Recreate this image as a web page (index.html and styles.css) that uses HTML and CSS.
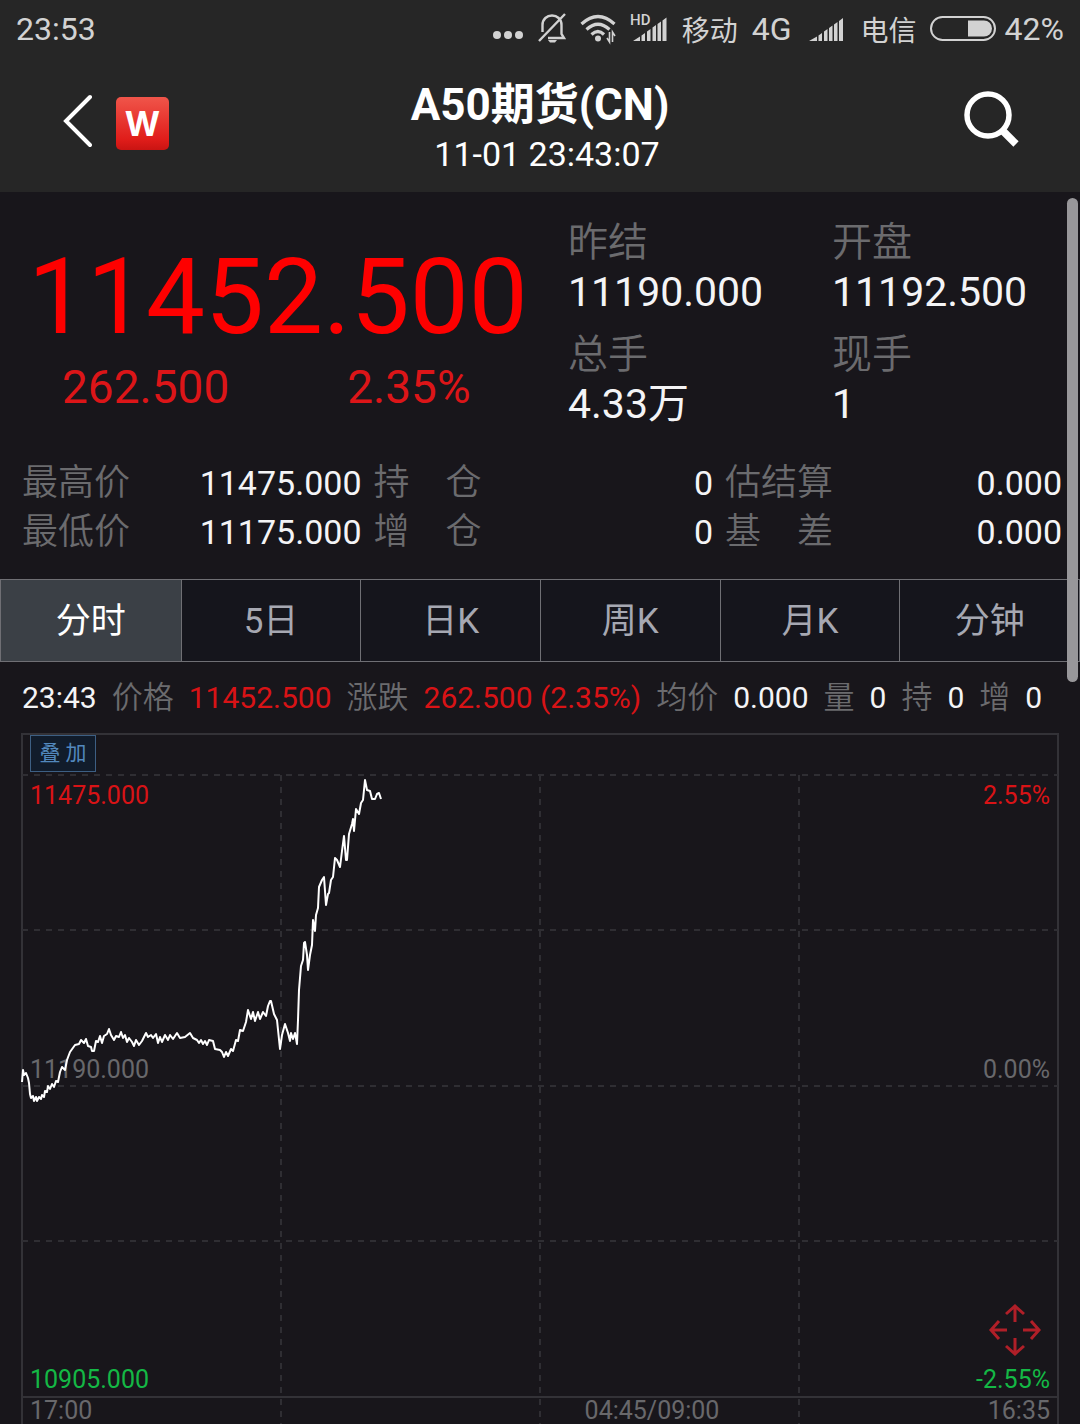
FILE: index.html
```html
<!DOCTYPE html>
<html lang="zh-CN">
<head>
    <meta charset="UTF-8">
    <meta name="viewport" content="width=device-width, initial-scale=1.0">
    <title>A50期货(CN)</title>
    <link rel="stylesheet" href="styles.css">
</head>
<body>
    <header class="top">
        <div class="status">
            <span class="clock">23:53</span>
            <svg class="dots" width="32" height="36" viewBox="0 0 32 36" fill="currentColor">
                <circle cx="5" cy="24" r="4"/><circle cx="16" cy="24" r="4"/><circle cx="27" cy="24" r="4"/>
            </svg>
            <svg class="bell" width="28" height="36" viewBox="0 0 28 36" fill="none" stroke="currentColor" stroke-width="2.400">
                <path d="M4.500 21V14C4.500 8 9 4.500 14 4.500S23.500 8 23.500 14V23L26 27H10M27 3L1 30"/>
                <path d="M10 29H19L17 31.500H12Z" fill="currentColor" stroke="none"/>
            </svg>
            <svg class="wifi" width="36" height="36" viewBox="0 0 36 36" fill="none" stroke="currentColor" stroke-width="3.200">
                <path d="M1.500 13Q18 -2 34.500 13M6.500 18.500Q18 8 29.500 18.500M11.500 23.500Q18 17.500 24 23.500"/>
                <circle cx="18" cy="27.500" r="3" fill="currentColor" stroke="none"/>
                <path d="M29.500 21V31L27 27M32.500 31V21L35 25" stroke-width="1.600"/>
            </svg>
            <svg class="signal-hd" width="38" height="36" viewBox="0 0 38 36" fill="currentColor">
                <text x="0" y="14" font-size="15" font-weight="500">HD</text>
                <path d="M3 30L10 25.500V30ZM11.500 24.500L15 22V30H11.500ZM17 20.500L20.500 18V30H17ZM22.500 16.500L26 14V30H22.500ZM27.500 13L31 10.500V30H27.500ZM32.500 9.500L36.500 6.500V30H32.500Z"/>
            </svg>
            <span class="carrier">移动</span>
            <span class="net">4G</span>
            <svg class="signal" width="36" height="36" viewBox="0 0 36 36" fill="currentColor">
                <path d="M1 30L9 25.500V30ZM10.500 24.500L14 22V30H10.500ZM16 20.500L19.500 18V30H16ZM21 17L24.500 14.500V30H21ZM26 13.500L29.500 11V30H26ZM31 10L35 7V30H31Z"/>
            </svg>
            <span class="carrier">电信</span>
            <svg class="battery" width="68" height="36" viewBox="0 0 68 36">
                <rect x="2" y="6" width="64" height="23" rx="11.500" fill="none" stroke="currentColor" stroke-width="2"/>
                <path d="M39 9.500H55A8 8 0 0 1 55 25.500H39Z" fill="currentColor"/>
            </svg>
            <span class="percent">42%</span>
        </div>
        <div class="nav">
            <div class="nav-left">
                <button class="icon-btn" aria-label="返回">
                    <svg width="30" height="54" viewBox="0 0 30 54" fill="none" stroke="currentColor" stroke-width="4" stroke-linecap="round">
                        <path d="M28 3L4 27L28 51"/>
                    </svg>
                </button>
                <span class="logo">W</span>
            </div>
            <div class="heading">
                <h1>A50期货(CN)</h1>
                <time>11-01 23:43:07</time>
            </div>
            <button class="icon-btn" aria-label="搜索">
                <svg width="56" height="58" viewBox="0 0 56 58" fill="none" stroke="currentColor">
                    <circle cx="24" cy="25" r="21" stroke-width="5.500"/>
                    <path d="M38 40L52 54" stroke-width="7.500"/>
                </svg>
            </button>
        </div>
    </header>

    <main class="content">
        <section class="quote">
            <div class="price">
                <div class="last">11452.500</div>
                <div class="change">
                    <span>262.500</span>
                    <span>2.35%</span>
                </div>
            </div>
            <dl class="facts">
                <div><dt>昨结</dt><dd>11190.000</dd></div>
                <div><dt>开盘</dt><dd>11192.500</dd></div>
                <div><dt>总手</dt><dd>4.33万</dd></div>
                <div><dt>现手</dt><dd>1</dd></div>
            </dl>
        </section>

        <table class="details">
            <tr>
                <th>最高价</th><td>11475.000</td>
                <th>持　仓</th><td>0</td>
                <th>估结算</th><td>0.000</td>
            </tr>
            <tr>
                <th>最低价</th><td>11175.000</td>
                <th>增　仓</th><td>0</td>
                <th>基　差</th><td>0.000</td>
            </tr>
        </table>

        <nav class="tabs">
            <button class="active">分时</button>
            <button>5日</button>
            <button>日K</button>
            <button>周K</button>
            <button>月K</button>
            <button>分钟</button>
        </nav>

        <div class="ticker">
            <b>23:43</b>
            <span>价格</span><b class="up">11452.500</b>
            <span>涨跌</span><b class="up">262.500 (2.35%)</b>
            <span>均价</span><b>0.000</b>
            <span>量</span><b>0</b>
            <span>持</span><b>0</b>
            <span>增</span><b>0</b>
        </div>

        <section class="chart">
            <svg class="plot" viewBox="21 733 1038 691" preserveAspectRatio="none">
                <path class="frame" d="M22 1424V734H1058V1424M22 1397H1058"/>
                <path class="grid" d="M22 775H1058M22 930H1058M22 1086H1058M22 1241H1058M281 775V1424M540 775V1424M799 775V1424"/>
            </svg>
            <svg class="plot front" viewBox="21 733 1038 691" preserveAspectRatio="none">
                <polyline class="line" points="22,1082 23,1070 24,1075 26,1073 28,1078 29,1083 30,1094 31,1098 33,1096 34,1101 36,1097 37,1101 39,1097 41,1099 42,1095 44,1097 45,1091 47,1092 48,1086 50,1089 52,1084 54,1087 56,1081 58,1082 60,1072 62,1067 65,1070 67,1060 70,1052 75,1045 79,1044 81,1040 84,1043 86,1039 88,1046 91,1047 92,1051 94,1051 96,1041 98,1042 100,1036 102,1043 104,1036 107,1034 109,1029 111,1035 114,1040 116,1036 119,1037 121,1032 123,1038 125,1035 127,1042 129,1038 132,1042 134,1046 136,1040 139,1045 142,1041 144,1037 146,1033 148,1037 151,1035 153,1038 156,1034 158,1043 160,1037 162,1042 165,1035 168,1040 170,1035 173,1039 177,1033 180,1038 185,1037 190,1033 193,1038 197,1040 199,1043 201,1040 203,1044 205,1041 207,1045 209,1040 213,1041 215,1049 220,1050 222,1052 224,1057 226,1052 228,1056 231,1049 233,1051 236,1040 238,1041 240,1030 243,1031 246,1022 248,1010 251,1019 253,1012 255,1021 258,1012 260,1019 263,1012 266,1016 268,1006 270,1001 271,1001 274,1014 277,1020 280,1049 282,1035 285,1024 288,1033 290,1041 291,1033 293,1039 295,1033 297,1044 298,1020 299,990 301,966 303,960 304,943 305,942 307,955 308,970 310,955 312,945 313,920 315,931 316,915 318,908 319,887 322,880 324,877 326,905 328,894 329,893 331,880 333,877 335,858 337,860 340,867 342,851 344,836 346,860 347,860 349,834 352,824 353,819 354,831 356,809 359,814 361,803 363,800 365,780 367,790 370,791 372,799 375,799 377,794 379,793 381,799"/>
            </svg>
            <div class="chart-top">
                <button class="overlay-btn">叠 加</button>
            </div>
            <div class="scale up"><span>11475.000</span><span>2.55%</span></div>
            <div class="scale flat"><span>11190.000</span><span>0.00%</span></div>
            <button class="expand" aria-label="放大">
                <svg width="54" height="54" viewBox="0 0 54 54" fill="none" stroke="currentColor" stroke-width="3">
                    <path d="M27 19V3M18 11L27 3L36 11M27 35V51M18 43L27 51L36 43M19 27H3M11 18L3 27L11 36M35 27H51M43 18L51 27L43 36"/>
                </svg>
            </button>
            <div class="scale down"><span>10905.000</span><span>-2.55%</span></div>
            <div class="times"><span>17:00</span><span>04:45/09:00</span><span>16:35</span></div>
        </section>
        <div class="scroll-thumb"></div>
    </main>
</body>
</html>
```
FILE: styles.css
```css
* {
    box-sizing: border-box;
}
body {
    margin: 0;
    min-height: 100vh;
    display: flex;
    flex-direction: column;
    background-color: #18161b;
    color: #f4f4f6;
    font-family: Roboto, "Noto Sans CJK SC", sans-serif;
}
button {
    font: inherit;
    color: inherit;
    background: none;
    border: none;
    padding: 0;
    cursor: pointer;
}
svg {
    display: block;
}

/* status bar and title */
.top {
    background-color: #262626;
    padding-bottom: 14px;
}
.status {
    display: flex;
    align-items: center;
    height: 58px;
    padding: 0 16px;
    color: #d2d2d2;
    font-size: 32px;
}
.clock {
    margin-right: auto;
}
.dots,
.bell,
.wifi,
.signal-hd {
    margin-right: 14px;
}
.carrier {
    font-size: 28px;
}
.net {
    margin: 0 16px 0 14px;
}
.signal {
    margin-right: 17px;
}
.battery {
    margin: 0 8px 0 12px;
}
.nav {
    display: grid;
    grid-template-columns: 1fr auto 1fr;
    padding: 21px 60px 0 60px;
    color: #fff;
}
.nav-left {
    display: flex;
    gap: 24px;
    padding: 15px 0 0 2px;
    align-items: flex-start;
}
.nav > .icon-btn {
    justify-self: end;
    align-self: start;
    padding-top: 11px;
}
.logo {
    width: 53px;
    height: 53px;
    margin-top: 3px;
    border-radius: 5px;
    background: linear-gradient(#f0554a, #e01d1a 80%, #c91412);
    font-family: Inter, sans-serif;
    font-size: 34px;
    font-weight: 700;
    line-height: 53px;
    text-align: center;
}
.heading {
    text-align: center;
}
.heading h1 {
    margin: 0;
    font-size: 44px;
    line-height: 52px;
    font-weight: 700;
}
.heading time {
    display: block;
    padding-left: 14px;
    font-size: 34px;
    line-height: 47px;
}

/* quote */
.content {
    position: relative;
    flex: 1;
    display: flex;
    flex-direction: column;
}
.quote {
    display: grid;
    grid-template-columns: 568px 1fr;
    padding-top: 26px;
}
.last {
    padding: 24px 0 0 28px;
    color: #fe0000;
    font-size: 105px;
    line-height: 112px;
}
.change {
    display: flex;
    gap: 118px;
    padding-left: 62px;
    color: #dc1518;
    font-size: 46px;
    line-height: 66px;
}
.facts {
    display: grid;
    grid-template-columns: 264px 1fr;
    row-gap: 14px;
    margin: 0;
    font-size: 41px;
}
.facts dt {
    color: #6b6b6e;
    font-size: 40px;
    font-weight: 350;
    line-height: 50px;
}
.facts dd {
    margin: 0;
    line-height: 48px;
}
.details {
    width: calc(100% - 40px);
    margin: 31px 18px 22px 22px;
    border-collapse: collapse;
    table-layout: fixed;
    font-size: 34px;
}
.details th,
.details td {
    height: 49px;
    padding: 0;
    line-height: 49px;
}
.details th {
    width: 11%;
    color: #6b6b6e;
    font-size: 36px;
    font-weight: 350;
    text-align: left;
    white-space: nowrap;
}
.details td {
    width: 22.8%;
    text-align: right;
    padding-right: 12px;
}
.details td:last-child {
    width: 21.4%;
    padding-right: 0;
}

/* period tabs */
.tabs {
    display: grid;
    grid-template-columns: repeat(6, 1fr);
    border: 1px solid #6f6f74;
    font-size: 35px;
}
.tabs button {
    height: 81px;
    padding-bottom: 6px;
    color: #a6a8b2;
    background-color: #15151c;
    border-left: 1px solid #6f6f74;
}
.tabs button:first-child {
    border-left: none;
}
.tabs .active {
    color: #fff;
    background-color: #3b4046;
}
.ticker {
    display: flex;
    gap: 15px;
    padding: 12px 22px 11px;
    font-size: 30px;
    line-height: 48px;
    white-space: nowrap;
}
.ticker span {
    color: #6b6b6e;
    font-size: 31px;
    font-weight: 350;
}
.ticker b {
    font-weight: 400;
}
.ticker .up {
    color: #d81316;
}

/* intraday chart */
.chart {
    position: relative;
    flex: 1;
    display: flex;
    flex-direction: column;
    min-height: 690px;
    margin: 0 21px;
    padding: 0 9px;
    font-size: 25px;
    line-height: 34px;
}
.plot {
    position: absolute;
    inset: 0;
    width: 100%;
    height: 100%;
    fill: none;
    pointer-events: none;
}
.front {
    z-index: 1;
}
.frame {
    stroke: #333237;
    stroke-width: 2;
}
.grid {
    stroke: #2f2e33;
    stroke-width: 2;
    stroke-dasharray: 6 6;
}
.line {
    stroke: #fff;
    stroke-width: 2;
    stroke-linejoin: round;
}
.chart-top {
    height: 46px;
    padding-top: 2px;
}
.overlay-btn {
    display: block;
    position: relative;
    width: 66px;
    height: 37px;
    border: 1px solid #3d5f83;
    background-color: #111c2b;
    color: #5288bd;
    font-size: 21px;
    line-height: 33px;
}
.scale,
.times {
    position: relative;
    display: flex;
    justify-content: space-between;
}
.scale.up {
    color: #d81316;
}
.flat {
    margin: auto 0;
    padding-top: 24px;
    color: #68686b;
}
.expand {
    position: relative;
    align-self: flex-end;
    margin: 0 8px 6px 0;
    color: #b01f28;
}
.scale.down {
    color: #14b845;
}
.times {
    display: grid;
    grid-template-columns: 1fr auto 1fr;
    padding-top: 1px;
    line-height: 26px;
    color: #68686b;
}
.times span:nth-child(2) {
    padding-left: 224px;
}
.times span:last-child {
    text-align: right;
}
.scroll-thumb {
    position: absolute;
    top: 6px;
    right: 2px;
    width: 11px;
    height: 484px;
    border-radius: 6px;
    background-color: #98979a;
    z-index: 2;
}
```
